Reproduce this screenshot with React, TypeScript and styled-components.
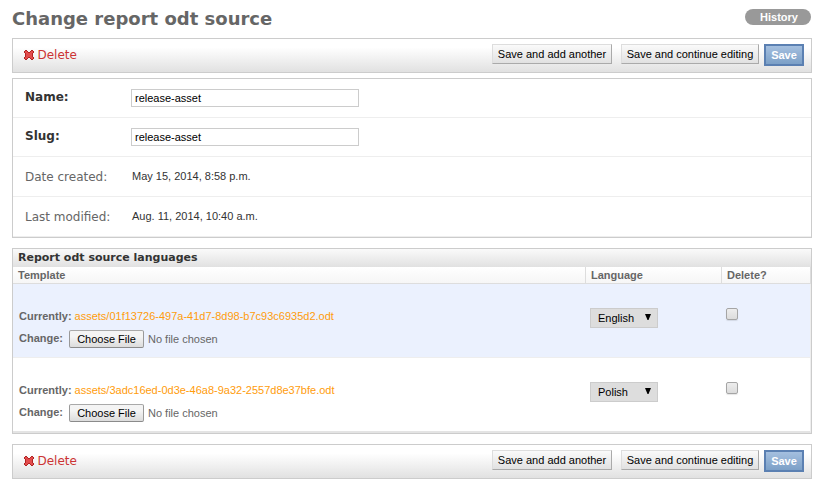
import React from "react";
import styled, { createGlobalStyle } from "styled-components";

const GlobalStyle = createGlobalStyle`
  *, *::before, *::after { box-sizing: border-box; }
  body {
    margin: 0;
    background: #fff;
    color: #333;
    font: 11px/14px "Liberation Sans", Arial, sans-serif;
  }
  button, input { font-family: inherit; }
`;

const Page = styled.main`
  width: 800px;
  margin-left: 12px;
  padding-top: 8px;
`;

const Header = styled.header`
  display: flex;
  justify-content: space-between;
  height: 30px;
`;

const Title = styled.h1`
  margin: 0;
  font: bold 18px/21px "DejaVu Sans", sans-serif;
  color: #666;
  white-space: nowrap;
`;

const HistoryLink = styled.a`
  width: 66px;
  height: 16px;
  margin: 1px 1px 0 0;
  padding-left: 2px;
  border-radius: 8px;
  background: #999;
  color: #fff;
  font-weight: bold;
  line-height: 16px;
  text-align: center;
`;

const SubmitRow = styled.div`
  display: flex;
  align-items: flex-start;
  height: 35px;
  padding: 5px 7px 0 11px;
  border: 1px solid #ccc;
  background: linear-gradient(#fff 25%, #e1e1e1);
`;

const DeleteLink = styled.a`
  display: flex;
  align-items: center;
  gap: 3.5px;
  margin-right: auto;
  height: 22px;
  color: #cc3434;
  font: 12px/22px "DejaVu Sans", sans-serif;
`;

const CrossIcon = styled.svg`
  display: block;
  width: 10px;
  height: 10px;
`;

const ActionButton = styled.button<{ $width: number }>`
  width: ${(p) => p.$width}px;
  height: 20px;
  margin-left: 9px;
  padding: 0;
  border: 1px solid;
  border-color: #ddd #aaa #aaa #ddd;
  background: linear-gradient(#fafafa, #e1e1e1);
  color: #000;
  font-size: 11px;
  line-height: 18px;
  white-space: nowrap;
`;

const SaveButton = styled(ActionButton)`
  height: 22px;
  margin-left: 5px;
  border: 2px solid #5b80b2;
  background: linear-gradient(#a4bfdf, #7ca0c7);
  color: #fff;
  font-weight: bold;
`;

const Fieldset = styled.section`
  margin-top: 5px;
  border: 1px solid #ccc;
`;

const FormRow = styled.div<{ $height: number }>`
  display: flex;
  height: ${(p) => p.$height}px;
  padding: 10px 12px 0;
  border-bottom: 1px solid #eee;
`;

const FieldLabel = styled.label<{ $required?: boolean }>`
  width: 106px;
  color: ${(p) => (p.$required ? "#333" : "#666")};
  font: ${(p) => (p.$required ? "bold" : "normal")} 12px/16px "DejaVu Sans", sans-serif;
  padding-top: ${(p) => (p.$required ? 0 : 2)}px;
`;

const TextInput = styled.input`
  width: 228px;
  height: 18px;
  padding: 1px 3px;
  border: 1px solid #ccc;
  background: #fff;
  color: #000;
  font-size: 11px;
  outline: none;
`;

const ReadOnlyValue = styled.span`
  padding: 2px 0 0 1px;
`;

const InlineGroup = styled.section`
  height: 186px;
  margin: 10px 0;
  border: 1px solid #ccc;
`;

const GroupTitle = styled.h2`
  height: 18px;
  margin: 0;
  padding-left: 5px;
  background: linear-gradient(#fafafa, #e1e1e1);
  color: #333;
  font: bold 11px/17px "DejaVu Sans", sans-serif;
`;

const Columns = styled.div`
  display: grid;
  grid-template-columns: 572px 136px 1fr;
  border-right: 1px solid #ddd;
`;

const HeadRow = styled(Columns)`
  height: 17px;
  border-bottom: 1px solid #ddd;
  background: linear-gradient(#fff, #f6f6f6);
`;

const HeadCell = styled.div`
  padding-left: 5px;
  color: #666;
  font-weight: bold;
  line-height: 16px;
  & + & { border-left: 1px solid #ddd; }
`;

const DataRow = styled(Columns)<{ $shaded: boolean }>`
  height: 74px;
  border-right-color: #eee;
  border-bottom: 1px solid #eee;
  background: ${(p) => (p.$shaded ? "#ebf1fe" : "#fff")};
  &:last-child {
    height: 75px;
    border-bottom: 2px solid #e4e4e4;
  }
`;

const FileCell = styled.div`
  padding: 25px 0 0 6px;
  color: #666;
`;

const FileLine = styled.div`
  display: flex;
  gap: 3px;
  height: 21px;
`;

const FileCaption = styled.strong<{ $offset?: number }>`
  padding-top: ${(p) => p.$offset ?? 0}px;
  white-space: nowrap;
`;

const FileName = styled.a`
  color: #ff9c0b;
`;

const FilePicker = styled.span`
  display: flex;
  gap: 4px;
  margin-left: 3px;
`;

const FileStatus = styled.span`
  padding-top: 2px;
`;

const ChooseButton = styled.button`
  width: 75px;
  height: 18px;
  padding: 0;
  border: 1px solid;
  border-color: #a9a9a9 #999 #8b8b8b #999;
  border-radius: 2px;
  background: linear-gradient(#f4f4f4 35%, #dcdcdc);
  color: #000;
  font-size: 11px;
  line-height: 16px;
`;

const LanguageCell = styled.div`
  padding: 24px 0 0 5px;
`;

const LanguageSelect = styled.button`
  display: flex;
  align-items: center;
  justify-content: space-between;
  width: 68px;
  height: 20px;
  padding: 0 6px 0 7px;
  border: 1px solid #ccc;
  background: #ddd;
  color: #000;
  font-size: 11px;
`;

const Arrow = styled.svg`
  width: 6px;
  height: 6px;
  margin-bottom: 2px;
`;

const DeleteCell = styled.div`
  padding: 24px 0 0 5px;
`;

const Checkbox = styled.input.attrs({ type: "checkbox" })`
  appearance: none;
  display: block;
  width: 12px;
  height: 12px;
  margin: 0;
  border: 1px solid #a5a5a5;
  border-radius: 2px;
  background: linear-gradient(#ededed, #dcdcdc);
  box-shadow: 0 1px 1px rgba(0, 0, 0, 0.1);
`;

const files = [
  { name: "assets/01f13726-497a-41d7-8d98-b7c93c6935d2.odt", language: "English" },
  { name: "assets/3adc16ed-0d3e-46a8-9a32-2557d8e37bfe.odt", language: "Polish" },
];

function Cross() {
  return (
    <CrossIcon viewBox="0 0 10 10" shapeRendering="crispEdges" aria-hidden="true">
      <path
        fill="#b02424"
        d="M1 0h2v1h1v1h2V1h1V0h2v1h1v2H9v4h1v2H9v1H7V9H6V8H4v1H3v1H1V9H0V7h1V3H0V1h1z"
      />
      <path
        fill="#e24c4c"
        d="M1 1h2v1h1v1h2V2h1V1h2v2H8v4h1v2H7V8H6V7H4v1H3v1H1V7h1V3H1z"
      />
    </CrossIcon>
  );
}

function SubmitBar() {
  return (
    <SubmitRow>
      <DeleteLink>
        <Cross />
        Delete
      </DeleteLink>
      <ActionButton $width={120}>Save and add another</ActionButton>
      <ActionButton $width={138}>Save and continue editing</ActionButton>
      <SaveButton $width={40}>Save</SaveButton>
    </SubmitRow>
  );
}

export default function App() {
  return (
    <>
      <GlobalStyle />
      <Page>
        <Header>
          <Title>Change report odt source</Title>
          <HistoryLink>History</HistoryLink>
        </Header>
        <SubmitBar />
        <Fieldset>
          <FormRow $height={39}>
            <FieldLabel $required htmlFor="name">Name:</FieldLabel>
            <TextInput id="name" defaultValue="release-asset" />
          </FormRow>
          <FormRow $height={39}>
            <FieldLabel $required htmlFor="slug">Slug:</FieldLabel>
            <TextInput id="slug" defaultValue="release-asset" />
          </FormRow>
          <FormRow $height={40}>
            <FieldLabel>Date created:</FieldLabel>
            <ReadOnlyValue>May 15, 2014, 8:58 p.m.</ReadOnlyValue>
          </FormRow>
          <FormRow $height={40}>
            <FieldLabel>Last modified:</FieldLabel>
            <ReadOnlyValue>Aug. 11, 2014, 10:40 a.m.</ReadOnlyValue>
          </FormRow>
        </Fieldset>
        <InlineGroup>
          <GroupTitle>Report odt source languages</GroupTitle>
          <HeadRow>
            <HeadCell>Template</HeadCell>
            <HeadCell>Language</HeadCell>
            <HeadCell>Delete?</HeadCell>
          </HeadRow>
          {files.map((file, index) => (
            <DataRow key={file.name} $shaded={index % 2 === 0}>
              <FileCell>
                <FileLine>
                  <FileCaption>Currently:</FileCaption>
                  <FileName>{file.name}</FileName>
                </FileLine>
                <FileLine>
                  <FileCaption $offset={1}>Change:</FileCaption>
                  <FilePicker>
                    <ChooseButton>Choose File</ChooseButton>
                    <FileStatus>No file chosen</FileStatus>
                  </FilePicker>
                </FileLine>
              </FileCell>
              <LanguageCell>
                <LanguageSelect>
                  {file.language}
                  <Arrow viewBox="0 0 6 6" aria-hidden="true">
                    <path d="M0 0h6L3.5 6h-1z" />
                  </Arrow>
                </LanguageSelect>
              </LanguageCell>
              <DeleteCell>
                <Checkbox aria-label="Delete" />
              </DeleteCell>
            </DataRow>
          ))}
        </InlineGroup>
        <SubmitBar />
      </Page>
    </>
  );
}
